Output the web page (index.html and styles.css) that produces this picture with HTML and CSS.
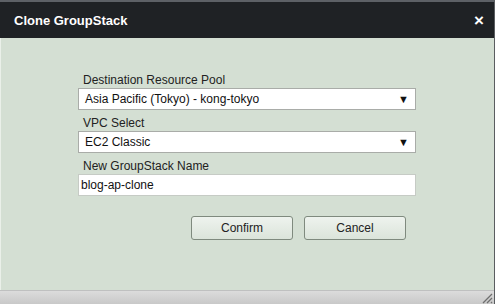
FILE: index.html
```html
<!DOCTYPE html>
<html>
<head>
<meta charset="utf-8">
<link rel="stylesheet" href="styles.css">
</head>
<body>
<div class="dialog">
  <div class="topline"></div>
  <div class="header">
    <span class="title">Clone GroupStack</span>
    <span class="close">×</span>
  </div>
  <div class="content">
    <div class="form">
      <div class="label first">Destination Resource Pool</div>
      <div class="select"><span>Asia Pacific (Tokyo) - kong-tokyo</span><span class="arrow">▼</span></div>
      <div class="label">VPC Select</div>
      <div class="select"><span>EC2 Classic</span><span class="arrow">▼</span></div>
      <div class="label">New GroupStack Name</div>
      <div class="input">blog-ap-clone</div>
      <div class="actions">
        <button class="btn">Confirm</button>
        <button class="btn">Cancel</button>
      </div>
    </div>
  </div>
  <div class="footer">
    <svg class="grip" width="12" height="12" viewBox="0 0 12 12">
      <path d="M11 2 L2 11 M11 6 L6 11 M11 10 L10 11" stroke="#6f6f6f" stroke-width="1.3" fill="none"/>
    </svg>
  </div>
</div>
</body>
</html>
```
FILE: styles.css
```css
* { box-sizing: border-box; }
html, body { margin: 0; padding: 0; }
body {
  width: 495px;
  height: 304px;
  overflow: hidden;
  font-family: Arial, "Liberation Sans", sans-serif;
  background: #d4dfd3;
}
.dialog {
  width: 495px;
  height: 304px;
  display: flex;
  flex-direction: column;
  border-right: 1px solid #5a5d60;
}
.topline {
  height: 2px;
  background: #5d6166;
}
.header {
  height: 36px;
  background: #1f2225;
  display: flex;
  align-items: center;
  justify-content: space-between;
  padding: 0 10px 0 14px;
  color: #fff;
}
.title {
  font-weight: bold;
  font-size: 13px;
}
.close {
  font-weight: bold;
  font-size: 17px;
  line-height: 1;
}
.content {
  flex: 1;
  padding: 29px 0 0 77px;
  border-left: 1px solid #eaf0e9;
}
.form {
  width: 338px;
  display: flex;
  flex-direction: column;
}
.label {
  font-size: 12px;
  line-height: 15px;
  padding-top: 6px;
  padding-left: 5px;
  color: #222;
}
.select, .input {
  height: 22px;
  background: #fff;
  border: 1px solid #a9aca8;
  font-size: 12px;
  color: #111;
  display: flex;
  align-items: center;
}
.select {
  justify-content: space-between;
  padding: 0 6px 0 6px;
}
.arrow {
  font-size: 11px;
  color: #111;
}
.input {
  border-color: #c6cbc5;
  padding-left: 2px;
}
.actions {
  display: flex;
  justify-content: flex-end;
  gap: 11px;
  margin-top: 20px;
  padding-right: 10px;
}
.btn {
  width: 102px;
  height: 24px;
  border: 1px solid #7f8a7e;
  border-radius: 3px;
  background: linear-gradient(#eef3ee, #dbe4da);
  font-family: Arial, "Liberation Sans", sans-serif;
  font-size: 12px;
  color: #222;
  padding: 0;
}
.footer {
  height: 14px;
  border-top: 1px solid #bfc0c0;
  background: linear-gradient(#dcdcdc, #c8c8c8);
  display: flex;
  justify-content: flex-end;
  align-items: flex-end;
}
.grip {
  display: block;
  margin-right: 1px;
}
```
